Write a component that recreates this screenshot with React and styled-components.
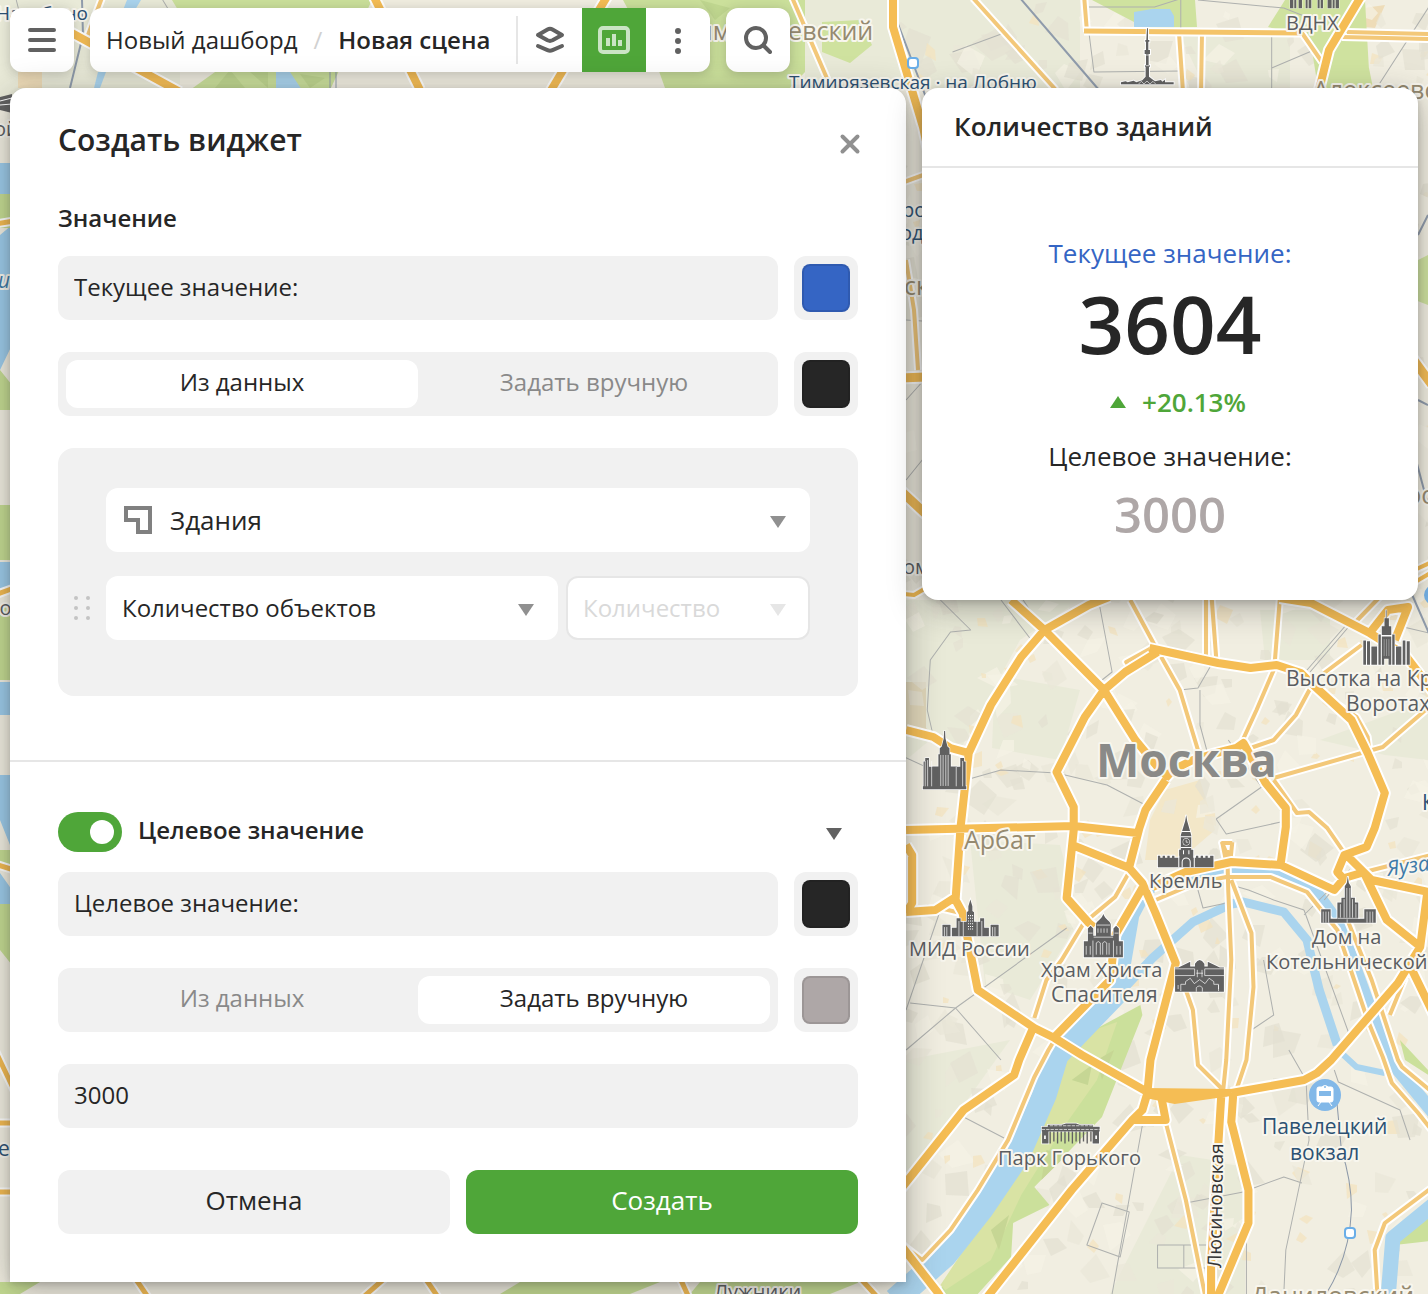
import { useState } from "react";
import styled, { createGlobalStyle } from "styled-components";

const GlobalStyle = createGlobalStyle`
  * {
    box-sizing: border-box;
  }
  body {
    margin: 0;
    background: #f1eee1;
    color: #262626;
    font-family: "Open Sans", "Noto Sans", sans-serif;
    font-size: 24px;
  }
  button, input, select {
    font: inherit;
    color: inherit;
    margin: 0;
  }
  h1, h2, p {
    margin: 0;
  }
`;

const Page = styled.div`
  position: relative;
  min-height: 100vh;
  overflow: hidden;
  display: flex;
  flex-direction: column;
  gap: 16px;
  padding: 8px 10px 12px;
`;

const MapCanvas = styled.svg`
  position: absolute;
  inset: 0;
  width: 100%;
  height: 100%;
  pointer-events: none;
`;

/* toolbar */

const Toolbar = styled.header`
  position: relative;
  display: flex;
  gap: 16px;
  height: 64px;
`;

const Block = styled.div`
  display: flex;
  align-items: center;
  overflow: hidden;
  border-radius: 12px;
  background: white;
  box-shadow: 0 2px 12px rgba(38, 38, 38, 0.25);
`;

const ToolButton = styled.button`
  display: flex;
  align-items: center;
  justify-content: center;
  width: 64px;
  height: 64px;
  padding: 0;
  border: 0;
  background: ${(p) => (p.$active ? "#4fa639" : "transparent")};
  color: ${(p) => (p.$active ? "#cae4c4" : "#616161")};
  cursor: pointer;
`;

const Crumbs = styled.nav`
  display: flex;
  align-items: center;
  gap: 16px;
  padding: 0 26px 2px 16px;
  height: 48px;
  border-right: 2px solid #e6e6e6;
  white-space: nowrap;

  a {
    color: inherit;
    text-decoration: none;
  }
  span {
    color: #d1d1d1;
  }
  b {
    font-weight: 600;
  }
`;

/* panels */

const Content = styled.main`
  position: relative;
  display: grid;
  grid-template-columns: minmax(0, 896fr) minmax(0, 496fr);
  gap: 16px;
  align-items: start;
`;

const Panel = styled.form`
  border-radius: 16px 16px 0 0;
  background: white;
  box-shadow: 0 2px 6px rgba(38, 38, 38, 0.2), 0 8px 36px rgba(38, 38, 38, 0.35);
`;

const Section = styled.section`
  display: flex;
  flex-direction: column;
  gap: 20px;
  padding: ${(p) => p.$padding};
  border-bottom: ${(p) => (p.$divided ? "2px solid #e6e6e6" : "0")};
`;

const PanelHead = styled.div`
  display: flex;
  align-items: center;
  justify-content: space-between;
  padding: 32px 48px 0;
`;

const PanelTitle = styled.h1`
  font-size: 30px;
  font-weight: 600;
  line-height: 40px;
`;

const SectionTitle = styled.h2`
  font-size: 24px;
  font-weight: 600;
  line-height: 36px;
`;

const IconButton = styled.button`
  display: flex;
  align-items: center;
  justify-content: center;
  width: ${(p) => p.$width};
  height: 40px;
  padding: ${(p) => p.$top} 0 0;
  border: 0;
  background: none;
  color: ${(p) => p.$color};
  cursor: pointer;
`;

const Fields = styled.div`
  display: flex;
  flex-direction: column;
  gap: 32px;
`;

const Row = styled.div`
  display: grid;
  grid-template-columns: minmax(0, 1fr) 64px;
  gap: 16px;
`;

const TextInput = styled.input`
  width: 100%;
  height: 64px;
  padding: 0 16px 4px;
  border: 0;
  border-radius: 12px;
  background: #f1f1f1;
`;

const Swatch = styled.input`
  width: 64px;
  height: 64px;
  padding: 8px;
  border: 0;
  border-radius: 12px;
  background: #f1f1f1;
  appearance: none;

  &::-webkit-color-swatch-wrapper {
    padding: 0;
  }
  &::-webkit-color-swatch {
    border: 2px solid rgba(0, 0, 0, 0.1);
    border-radius: 8px;
  }
`;

const Segments = styled.div`
  display: grid;
  grid-template-columns: 1fr 1fr;
  height: 64px;
  padding: 8px;
  border-radius: 12px;
  background: #f1f1f1;
`;

const Segment = styled.label`
  display: flex;
  align-items: center;
  justify-content: center;
  padding-bottom: 5px;
  border-radius: 12px;
  color: #898989;
  cursor: pointer;

  &:has(input:checked) {
    background: white;
    color: #262626;
  }
  input {
    appearance: none;
    width: 0;
    height: 0;
  }
`;

const SourceGroup = styled.div`
  display: grid;
  grid-template-columns: 16px minmax(0, 1fr);
  gap: 24px 16px;
  align-items: center;
  padding: 40px 48px 56px 16px;
  border-radius: 16px;
  background: #f1f1f1;
`;

const Pair = styled.div`
  display: grid;
  grid-template-columns: minmax(0, 452fr) minmax(0, 244fr);
  gap: 8px;
`;

const SelectBox = styled.div`
  position: relative;
  grid-column: ${(p) => p.$column};

  select {
    display: block;
    width: 100%;
    height: 64px;
    padding: ${(p) => (p.$icon ? "0 56px 0 64px" : "0 56px 2px 16px")};
    border: 0;
    border-radius: 12px;
    background: white;
    font-size: ${(p) => (p.$icon ? "26px" : "24px")};
    appearance: none;
  }
  select:disabled {
    padding-left: 15px;
    border: 2px solid #e6e6e6;
    color: #d9d9d9;
    opacity: 1;
  }
`;

const SelectIcon = styled.svg`
  position: absolute;
  left: 18px;
  top: 18px;
  pointer-events: none;
`;

const SwitchRow = styled.div`
  display: flex;
  align-items: center;
  justify-content: space-between;
  height: 40px;
`;

const SwitchLabel = styled.label`
  display: flex;
  align-items: center;
  gap: 16px;
  font-weight: 600;
  line-height: 36px;

  span {
    padding-bottom: 4px;
  }
`;

const Switch = styled.input`
  display: flex;
  justify-content: flex-end;
  width: 64px;
  height: 40px;
  padding: 8px;
  border-radius: 20px;
  background: #b8b8b8;
  appearance: none;

  &::before {
    content: "";
    width: 24px;
    height: 24px;
    border-radius: 50%;
    background: white;
  }
  &:checked {
    background: #4fa639;
  }
  &:not(:checked) {
    justify-content: flex-start;
  }
`;

const Footer = styled.div`
  display: grid;
  grid-template-columns: 1fr 1fr;
  gap: 16px;
  padding: 42px 48px 48px;
`;

const Button = styled.button`
  height: 64px;
  padding: 0 16px 4px;
  border: 0;
  border-radius: 12px;
  background: ${(p) => (p.$primary ? "#4fa639" : "#f1f1f1")};
  color: ${(p) => (p.$primary ? "white" : "#262626")};
  font-size: 26px;
  cursor: pointer;
`;

/* widget card */

const Card = styled.aside`
  border-radius: 16px;
  background: white;
  box-shadow: 0 2px 6px rgba(38, 38, 38, 0.2), 0 8px 32px rgba(38, 38, 38, 0.35);
`;

const CardTitle = styled.h2`
  padding: 20px 32px 22px;
  border-bottom: 2px solid #e6e6e6;
  font-size: 26px;
  font-weight: 600;
  line-height: 36px;
`;

const CardBody = styled.div`
  display: flex;
  flex-direction: column;
  align-items: center;
  padding: 66px 32px 54px;
`;

const CardText = styled.p`
  color: ${(p) => p.$color};
  font-size: ${(p) => p.$size};
  font-weight: ${(p) => p.$weight || 400};
  line-height: ${(p) => p.$line};
`;

const Delta = styled.div`
  display: flex;
  align-items: center;
`;

/* small parts */

const Triangle = (props) => (
  <svg width="16" height="12" viewBox="0 0 16 12" {...props}>
    <path d="M0 0h16L8 12z" fill="currentColor" />
  </svg>
);

const SelectArrow = styled(Triangle)`
  position: absolute;
  right: 24px;
  top: 28px;
  pointer-events: none;
  color: ${(p) => p.color};
`;

const Dropdown = ({ label, options, icon, disabled, column }) => (
  <SelectBox $icon={icon} $column={column}>
    <select aria-label={label} disabled={disabled}>
      {options.map((o) => (
        <option key={o}>{o}</option>
      ))}
    </select>
    {icon && (
      <SelectIcon width="28" height="28" viewBox="0 0 28 28">
        <path d="M2 2h24v24H14V14H2z" fill="none" stroke="#808080" strokeWidth="4" />
      </SelectIcon>
    )}
    <SelectArrow color={disabled ? "#e6e6e6" : "#909090"} />
  </SelectBox>
);

const SourceSwitch = ({ name, value, onChange }) => (
  <Segments>
    {["Из данных", "Задать вручную"].map((text) => (
      <Segment key={text}>
        <input
          type="radio"
          name={name}
          checked={value === text}
          onChange={() => onChange(text)}
        />
        {text}
      </Segment>
    ))}
  </Segments>
);

/* map data */

const primaryRoads = `
M1010 600L1043 630L1102 690L1133 740L1155 767L1166 778
M1107 597L1087 605L1043 630L1020 657L990 705L968 753L960 827L955 900L962 913L977 990L1033 1028L1053 1038L1080 1055L1145 1092
M1102 690L1123 672L1155 652M1147 648L1215 663L1247 668L1273 665L1297 673L1307 683L1347 720L1363 753L1380 793L1370 828L1362 847L1340 855L1333 872L1340 880
M1102 690L1083 717L1055 772L1072 807L1072 830L1065 898L1087 923L1092 927
M1073 846L1127 868L1140 883L1153 913L1173 963L1148 1060L1145 1092
M906 830L1072 826L1135 833M1163 780L1143 810L1137 828L1127 867
M1163 778L1170 770L1190 760L1213 753L1233 748L1240 743L1262 783L1282 808L1282 827L1277 863
M1276 598L1307 603L1365 633L1400 655L1434 700M1365 633L1383 610L1403 607L1390 640
M906 730L933 737L950 748L968 753
M906 912L935 910L955 897
M906 845L912 855L912 903L906 913
M1140 888L1113 935L1108 980L1053 1037M1033 1025L1018 1060L1013 1075L963 1110L900 1190
M1150 887L1183 872L1228 862L1277 865L1330 890L1340 878L1360 872
M1340 853L1367 880L1428 893M1360 874L1382 920L1413 945M1422 893L1415 947L1393 983L1327 1060L1313 1073L1300 1080L1228 1093M1407 970L1432 1022
M1145 1093L1140 1110L1130 1120L1163 1120L1158 1093M1130 1120L1070 1190L984 1300
M1218 1097L1208 1263L1208 1300M1230 1093L1228 1122L1245 1190L1245 1223L1213 1300
M900 1244L937 1292L945 1304`;

const minorRoads = `
M1128 600L1152 645L1177 690L1195 750
M1203 590V657M1208 590L1213 657M1276 600L1271 663
M1122 673L1129 669L1124 662L1149 648
M1307 687L1352 717L1363 737L1365 753
M1270 670L1253 710L1238 743M1247 748L1270 740L1292 715L1308 685M1320 673L1357 645M1375 597L1350 623
M1270 778L1357 753L1378 747L1434 698
M1270 780L1293 813L1305 812L1323 828L1340 853
M935 907L960 913M1219 842L1223 862M1229 842L1227 862L1219 843H1229
M1127 872L1113 897L1082 923L1060 960L1045 980L1033 1018
M1053 1040L1047 1050L1033 1077L1007 1140L977 1190L950 1230L922 1260L900 1243
M1153 900L1193 883L1223 877L1267 877L1303 892L1333 930L1363 1020L1378 1057L1387 1083L1413 1113L1434 1140
M1343 920L1367 980L1393 1060L1397 1067L1434 1098
M1224 850L1225 890L1228 960L1223 1060L1220 1090M1228 880L1248 933L1250 987L1243 1060L1233 1090
M1183 990L1190 1010L1195 1065L1220 1090M1163 1122L1183 1200L1203 1300
M1434 1182L1380 1223L1370 1250L1373 1300M1360 872L1434 853M1400 978L1385 1015`;

const topRoads = `
M373 -5L420 90M608 -5L550 92M70 32L180 92M893 -5V27L923 127L930 160
M1362 -5L1329 50L1319 90`;

const topMinorRoads = `
M103 -5L88 35M791 -5L832 90M973 -2L1056 90M1084 -5L1087 32
M1179 33L1183 92M1202 33L1201 92M1302 33L1322 62M1347 32L1432 34M1342 37L1432 39
M904 182L926 174M906 260L914 310L918 370`;

const greyLines = `
M900 755L958 782L1000 770L1055 773L1105 785L1143 805M940 600L970 630L950 632L930 660L927 710L935 745
M1000 600L1030 640M1096 597L1110 672L1100 680M1177 690L1195 688L1207 667M1197 690V725L1205 755
M1213 819L1258 787L1225 740M1277 822L1223 834L1213 819M1195 890L1200 908L1228 902M1228 885L1245 890L1270 900L1300 910M1300 915L1345 870L1320 900
M906 1050L955 1008L1000 1060M910 1003L955 1008L1065 928M906 1010L940 910M963 1117L1003 1138
M1140 1125L1110 1294M1100 1203L1127 1212L1118 1257L1085 1245ZM1183 1203L1245 1191M1155 1245H1210V1268H1155ZM1181 1245V1268
M1280 1294L1282 1250L1305 1140L1302 1080L1285 1050M1330 1070L1334 1082L1395 1110L1405 1140M1245 1190L1280 1177L1298 1183M1243 1190V1294
M1260 960L1270 1015L1248 1030M1300 910L1318 960L1345 1035M1350 620L1306 672M1346 620L1303 670M1428 634L1390 625
M25 0L28 12M170 0L182 20M1087 32L1092 72L1180 71M952 52L1003 33M1268 35V88M1268 68L1310 50M1428 0L1372 88M1178 0V30M1084 7L1152 7L1180 -2M1195 0L1280 8L1305 18
M906 320L922 321M906 400L922 382M906 480L922 460M1020 597L1035 620`;

// city blocks, scattered with a fixed seed so that the map never flickers
const patches = [];
let seed = 11;
const rnd = () => {
  seed = (seed * 16807) % 2147483647;
  return seed / 2147483647;
};
const blockFills = ["#e4e1d3", "#f5f2e6", "#e9e7d8", "#f4e3bd", "#e2e0d1"];
for (let i = 0; i < 800; i++) {
  const x = rnd() * 540 + 900;
  const y = rnd() * 1294;
  const yellow = i % 5 === 3;
  const s = yellow ? 4 + rnd() * 7 : 6 + rnd() * 12;
  const a = rnd() * 3;
  const points = [0, 1, 2, 3].map((k) => {
    const r = s * (0.4 + rnd() * 0.9);
    return `${Math.round(x + r * Math.cos(a + k * 1.57))},${Math.round(y + r * Math.sin(a + k * 1.57))}`;
  });
  patches.push({ points: points.join(" "), fill: blockFills[i % 5] });
}

const labels = [
  { x: 1286, y: 30, text: "ВДНХ" },
  { x: 1286, y: 686, text: "Высотка на Кр", size: 21 },
  { x: 1346, y: 711, text: "Воротах", size: 21 },
  { x: 1149, y: 888, text: "Кремль" },
  { x: 909, y: 956, text: "МИД России" },
  { x: 1041, y: 977, text: "Храм Христа" },
  { x: 1051, y: 1002, text: "Спасителя", size: 21 },
  { x: 1312, y: 944, text: "Дом на" },
  { x: 1266, y: 969, text: "Котельнической" },
  { x: 998, y: 1165, text: "Парк Горького" },
  { x: 1262, y: 1134, text: "Павелецкий", size: 21, fill: "#2c5173" },
  { x: 1290, y: 1160, text: "вокзал", size: 21, fill: "#2c5173" },
  { x: 964, y: 849, text: "Арбат", size: 25, fill: "#958a70" },
  { x: 683, y: 40, text: "Тимирязевский", size: 25, fill: "#958a70" },
  { x: 1313, y: 99, text: "Алексеевский", size: 25, fill: "#958a70" },
  { x: 1251, y: 1305, text: "Даниловский", size: 25, fill: "#958a70" },
  { x: 714, y: 1299, text: "Лужники" },
  { x: 789, y: 89, text: "Тимирязевская · на Лобню", size: 19, fill: "#2c5173" },
  { x: -4, y: 20, text: "Нахабино", size: 19, fill: "#2c5173" },
  { x: -6, y: 136, text: "ой" },
  { x: -12, y: 288, text: "ки", size: 21, fill: "#3d7aa8", italic: true },
  { x: -12, y: 615, text: "во" },
  { x: -14, y: 1156, text: "ле", size: 21, fill: "#2c5173" },
  { x: 902, y: 217, text: "ро", fill: "#2c5173" },
  { x: 900, y: 240, text: "од", fill: "#2c5173" },
  { x: 904, y: 295, text: "ск", size: 25, fill: "#958a70" },
  { x: 903, y: 574, text: "ом" },
  { x: 1406, y: 504, text: "рос", size: 25, fill: "#958a70" },
  { x: 1422, y: 810, text: "К", size: 21, fill: "#2c5173" },
];

const Label = styled.text`
  font-family: "Open Sans", "Noto Sans", sans-serif;
  stroke: #f8f6ee;
  stroke-width: 4px;
  stroke-linejoin: round;
  paint-order: stroke;
`;

const Roads = ({ d, width, color }) => (
  <>
    <path d={d} stroke="white" strokeWidth={width + 4} />
    <path d={d} stroke={color} strokeWidth={width} />
  </>
);

const Landmarks = () => (
  <g fill="#616161" stroke="white" strokeWidth="6" paintOrder="stroke">
    {/* Ostankino tower and VDNKh */}
    <g transform="translate(952 0) scale(.3333)">
      <path d="M585 85h3v35h4v5h-3v25h5v12h-4v33h4v5h-3v30l18 14 18-4 4 5 8-6v8h26v6H507v-6l14-3 6 3 18-5 8 5 18-6 10-11v-30h-2v-5h3v-33h-4v-12h4v-25h-2v-5h3z" />
      <path d="M580 197h13M579 165h14M560 252l8-8 8 8 9-9 9 9 9-8 8 8" stroke="#fff" strokeWidth="2" fill="none" />
      <path d="M1014 0h10v25h-10zM1027 0h6v25h-6zM1040 0h10v25h-10zM1061 0h6v25h-6zM1070 0h8v25h-8zM1097 0h6v25h-6zM1106 0h7v25h-7zM1127 0h12v25h-12zM1142 0h6v25h-6zM1151 0h10v25h-10z" strokeWidth="2" />
    </g>
    <g transform="translate(900 590) scale(.3367)">
      <path d="M1376 150h8v72h-8zM1387 152h9v70h-9zM1400 168h17v54h-17zM1421 132h7v90h-7zM1431 108h8V84h4V60h2v24h7v24h7v26h-28zM1431 138h28v84h-8v-18h-13v18h-7zM1462 132h7v90h-7zM1473 168h16v54h-16zM1493 150h8v72h-8zM1505 152h9v70h-9z" strokeWidth="4" />
      <path d="M1438 146v50M1445 146v50M1452 146v50" stroke="#fff" strokeWidth="1" />
      <path d="M70 583v-74h5v-10h11v26h10v-1h18v-36h4v-18l6-5 6-24 1-22h3l1 22 6 24 6 5v18h4v36h18v1h10v-26h11v10h5v74h2v9H68v-9z" strokeWidth="4" />
      <path d="M94 508v75M121 490v92M128 490v92M136 490v92M143 490v92M167 525v58M186 508v75M75 508v75M82 505v78" stroke="#fff" strokeWidth="2" />
    </g>
    <g transform="translate(900 820) scale(.3367)">
      {/* Kremlin */}
      <path d="M766 140v-34h7v6h7v-6h7v6h7v-6h7v6h7v-6h7v6h14V88h5V45l13-42 3-18 3 18 12 42v43h6v24h8v-6h7v6h7v-6h7v6h7v-6h7v6h7v-6h10v34z" strokeWidth="5" />
      <path d="M837 34h27M834 50h32M834 82h32M828 106v34M874 106v34M838 140v-15a12 12 0 0 1 24 0v15M842 90v12M858 90v12" stroke="#fff" strokeWidth="3" fill="none" />
      <circle cx="850" cy="65" r="9" fill="#616161" stroke="#fff" strokeWidth="3" />
      <path d="M850 59v7h6" stroke="#fff" strokeWidth="2" fill="none" />
      {/* Foreign ministry */}
      <path d="M126 345v-34h24v34zM154 345v-25h14v-28h12v10h18v-28l5-4v-14l6-20 6 20v14l5 4v28h18v-10h12v28h14v25zM269 345v-34h24v34z" strokeWidth="4" />
      <path d="M132 318v27M139 318v27M175 300v45M188 300v45M229 300v45M243 300v45M275 318v27M282 318v27" stroke="#fff" strokeWidth="2" />
      <path d="M202 284h16M202 292h16M202 300h16M202 308h16M202 316h16M202 324h16" stroke="#fff" strokeWidth="3" strokeDasharray="3 3" />
      {/* Cathedral */}
      <path d="M546 408v-48h12v-38l8-8 8 8v22h8v-33c0-12 16-14 22-32 6 18 22 20 22 32v33h8v-22l8-8 8 8v38h12v48z" strokeWidth="5" />
      <path d="M584 312h40M560 336h12M637 336h12M588 322v13M597 322v13M606 322v13M615 322v13M575 348h58" stroke="#fff" strokeWidth="2" />
      <path d="M553 400v-26M565 374v26M583 400v-35q6-8 12 0v35M602 400v-35q6-8 12 0v35M621 400v-35M644 374v26M654 374v26M573 358v50M634 358v50" stroke="#fff" strokeWidth="2" fill="none" />
      {/* Tretyakov gallery */}
      <path d="M817 510v-72h10l35-17v14h14v-8q14-22 28 0v8h10v-14l36 17h12v72z" strokeWidth="5" />
      <path d="M817 442h58v20h-58M963 442h-58v20h58M883 445v22M897 445v22M880 455h20M834 508v-20h14v-8l14-10 12 16 16-12 16 12 12-16 14 10v8h14v20M880 510v-12q9-10 18 0v12M826 490v12M946 490v12" stroke="#fff" strokeWidth="2" fill="none" />
      {/* Kotelnicheskaya */}
      <path d="M1251 305v-40h28v28h20v-48h12v-14h10v-34l6-10 3-20 3 20 6 10v34h12v14h10v48h18v-28h34v40z" strokeWidth="5" />
      <path d="M1257 272v33M1265 272v33M1273 272v33M1308 250v40M1319 235v55M1327 202v88M1336 202v88M1344 235v55M1354 250v40M1387 272v33M1396 272v33M1404 272v33M1300 292h65M1328 295v10" stroke="#fff" strokeWidth="2" />
    </g>
    {/* Gorky park gate */}
    <g transform="translate(900 1050) scale(.3367)">
      <path d="M421 228h18v-6h42l12-4h30l10 4h40v6h20v14h-2v36h-19v-36H441v36h-19v-36h-1z" strokeWidth="4" />
      <path d="M421 236h172M445 225h130" stroke="#fff" strokeWidth="2" strokeDasharray="10 3" />
      <path d="M446 242v36M457 242v30M468 242v36M479 242v30M490 242v36M501 242v30M512 242v36M523 242v30M534 242v36M545 242v30M556 242v36M567 242v30" stroke="#616161" strokeWidth="4" />
      <path d="M428 254h5v10h-5zM580 254h5v10h-5z" fill="#fff" stroke="none" />
    </g>
  </g>
);

const CityMap = () => (
  <MapCanvas viewBox="0 0 1428 1294" preserveAspectRatio="xMinYMin slice" aria-hidden="true">
    <rect width="1428" height="1294" fill="#f1eee1" />
    <path d="M906 600H1080L1020 640L960 750L930 740L906 760ZM995 675L1080 690L1060 760L992 748ZM970 840L1060 845L1080 920L1030 1000L985 985ZM1260 610H1330V660H1265ZM1320 740L1428 700V760L1385 755ZM1180 1155L1245 1165V1294H1110ZM906 1060L1010 1040L960 1110L906 1180ZM805 0H1080V88H805ZM1180 35H1290V88H1205ZM0 0H180V100H0Z" fill="#e9ead8" />
    <path d="M906 682H926V728L933 735H906Z" fill="#e0d6b9" />
    <path d="M18 72H42V88H18ZM1350 10L1385 5L1375 28L1355 26Z" fill="#eedcb8" />
    <path d="M1165 790L1200 780L1215 830L1180 860H1145L1150 820Z" fill="#f3e7c8" />
    {patches.map((p, i) => (
      <polygon key={i} points={p.points} fill={p.fill} opacity=".7" />
    ))}

    <path d="M172 0H372L330 90H190L215 72ZM623 0H805V72L790 88H665L655 60Z" fill="#cbe09b" />
    <path d="M230 70L245 88H215ZM700 0L730 8L715 20ZM250 72H268V88ZM300 74L325 78L310 88Z" fill="#bfd68f" />
    <path d="M1092 0H1195L1197 27L1150 28L1134 22ZM1268 27L1285 0H1365L1370 88H1318L1310 38ZM1350 40L1367 58L1373 88H1330ZM822 22L860 20L872 45L850 63L822 52ZM1418 260L1428 255V305L1415 300Z" fill="#cfe29f" />
    <path d="M1134 12L1152 9H1170L1174 16V27H1134ZM98 72H106L100 88H94ZM276 72H290L302 90H276ZM127 0H141L135 10H123Z" fill="#aad4ee" />

    {/* strip along the left edge */}
    <path d="M0 163H12V194H0ZM0 235L12 225V345L0 370ZM0 562H12V590H0ZM0 682H12V715H0ZM0 775H12V850L0 820ZM0 873L12 890V904H0Z" fill="#9ccbea" />
    <path d="M0 194H12V228H0ZM0 370L12 385V410H0ZM0 505H12V560H0ZM0 605H12V680H0ZM0 850H12V870H0ZM0 904H12V965L0 950Z" fill="#c5dc92" />
    <g fill="none">
      <Roads d="M-5 224L14 221M-5 595L14 588M-5 864L14 870M-5 1050L14 1090M-5 1123H14M-5 1192H14" width={5} color="#f3ba51" />
    </g>
    <path d="M0 1282H40L20 1294H0ZM520 1282H660L630 1294H500ZM700 1282H860L830 1294H690Z" fill="#c5dc92" />
    <g fill="none">
      <Roads d="M135 1278L150 1300M360 1300L385 1278M425 1278L440 1300M680 1278L690 1300M860 1278L880 1300" width={5} color="#f3ba51" />
    </g>

    <g fill="none" strokeLinejoin="round" strokeLinecap="butt">
      <g transform="matrix(1.01 0 0 1 -9 0)">
        <path d="M1092 1030L1138 1005L1140 1015L1100 1117L1033 1187L1048 1205L1012 1223L1010 1257L977 1294H937L1007 1183L1043 1117L1055 1070Z" fill="#cbe09b" />
        <path d="M1060 1060L1092 1030L1115 1022L1095 1080L1060 1130L1020 1195L990 1260L945 1290L940 1285L1007 1183L1043 1117Z" fill="#d9e3a4" />
        <path d="M1070 1080L1090 1065L1086 1085ZM1045 1150L1065 1155L1040 1180ZM990 1230L1008 1215L998 1250ZM1095 1060L1112 1050L1100 1080Z" fill="#c6d694" />
        <path d="M1395 1040L1434 1082L1400 1060ZM1388 1240L1434 1210V1240L1390 1245Z" fill="#cbe09b" />
        <g stroke="#aad4ee">
          <path d="M1143 890L1130 915L1124 950L1118 985" strokeWidth="14" />
          <path d="M1120 975L1112 995L1090 1018L1055 1055L1043 1095L1017 1155L980 1210L945 1255L895 1300" strokeWidth="24" />
          <path d="M1140 896L1165 880L1228 870L1275 872L1315 893" strokeWidth="7" />
          <path d="M1310 890L1335 925L1362 1000L1385 1060L1434 1120" strokeWidth="13" />
          <path d="M1122 988L1150 958L1190 922L1228 904L1240 902L1280 912L1303 940L1315 990L1333 1045" strokeWidth="9" />
          <path d="M1337 1053L1352 1067L1380 1073" strokeWidth="6" />
          <path d="M1434 1200L1388 1238L1383 1300" strokeWidth="15" />
          <path d="M906 860V900" strokeWidth="6" />
        </g>
        <path d={greyLines} stroke="#aeb0ae" strokeWidth="1" />
        <path d="M1331 1085L1337 1150Q1347 1180 1347 1210Q1345 1260 1318 1300" stroke="#8c98a8" strokeWidth="1" />
        <Roads d={minorRoads} width={4} color="#f3c879" />
        <Roads d={primaryRoads} width={8} color="#f5bd54" />
        <path d="M1143 1088L1228 1089V1096L1172 1104L1143 1098Z" fill="#f5bd54" />
      </g>
      <path d="M1020 -2L1099 90M82 0L83 35L70 88M1410 590L1432 640M1418 235L1428 215M1418 400L1428 405M1416 460L1428 505M898 0V24L927 100" stroke="#8f9bab" strokeWidth="2" />
      <path d="M330 72V90M336 72V90" stroke="#8f9bab" strokeWidth="1" />
      <Roads d={topMinorRoads} width={4} color="#f3c879" />
      <Roads d="M1084 31L1302 33" width={5} color="#f4c469" />
      <Roads d={topRoads} width={8} color="#f5bd54" />
      <Roads d="M900 378L926 377M900 490L930 518M1410 355L1432 385" width={9} color="#f5bd54" />
      <Roads d="M904 594L914 595L926 588M1410 572L1432 562M1410 585L1432 572" width={4} color="#f5bd54" />
    </g>

    <g fill="white" stroke="#6aaee8" strokeWidth="2">
      <rect x="908" y="58" width="10" height="10" rx="3" />
      <rect x="1345" y="1228" width="10" height="10" rx="3" />
    </g>
    <circle cx="1434" cy="595" r="10" fill="#75b3ea" />
    <circle cx="1325" cy="1095" r="16" fill="#82b8e8" />
    <path d="M1317 1089q0-2 2-2h3a4 4 0 0 1 6 0h3q2 0 2 2v11q0 2-2 2h-12q-2 0-2-2zM1321 1102l-3 4M1329 1102l3 4" fill="white" stroke="white" />
    <rect x="1319" y="1091" width="12" height="5" fill="#82b8e8" />
    <circle cx="1325" cy="1087" r="1" fill="#82b8e8" />

    <Landmarks />

    {labels.map((l) => (
      <Label
        key={l.text + l.y}
        x={l.x}
        y={l.y}
        fontSize={l.size || 20}
        fill={l.fill || "#5a5d61"}
        fontStyle={l.italic ? "italic" : "normal"}
      >
        {l.text}
      </Label>
    ))}
    <Label x="1096" y="777" fontSize="46" fontWeight="700" fill="#8a8a88">
      Москва
    </Label>
    <Label transform="translate(1221 1268) rotate(-89)" fontSize="19" fill="#333">
      Люсиновская
    </Label>
    <Label transform="translate(1388 876) rotate(-8)" fontSize="21" fontStyle="italic" fill="#3d7aa8">
      Яуза
    </Label>
    <path d="M0 97L12 94V113L0 110Z" fill="#616161" />
    <path d="M0 101L12 98M0 105L12 104" stroke="white" />
  </MapCanvas>
);

export default function App() {
  const [current, setCurrent] = useState("Из данных");
  const [target, setTarget] = useState("Задать вручную");

  return (
    <Page>
      <GlobalStyle />
      <CityMap />
      <Toolbar>
        <Block>
          <ToolButton aria-label="Меню">
            <svg width="28" height="24" viewBox="0 0 28 24">
              <path d="M2 2h24M2 12h24M2 22h24" stroke="currentColor" strokeWidth="4" strokeLinecap="round" />
            </svg>
          </ToolButton>
        </Block>
        <Block>
          <Crumbs>
            <a href="#dashboard">Новый дашборд</a>
            <span>/</span>
            <b>Новая сцена</b>
          </Crumbs>
          <ToolButton aria-label="Слои">
            <svg width="32" height="32" viewBox="0 0 32 32" fill="none" stroke="currentColor" strokeWidth="4" strokeLinejoin="round" strokeLinecap="round">
              <path d="M4 11L13.500 5.500Q16 4 18.500 5.500L28 11L18.500 16.300Q16 17.500 13.500 16.300Z" />
              <path d="M4 22L13.500 26.200Q16 27.300 18.500 26.200L28 22" />
            </svg>
          </ToolButton>
          <ToolButton $active aria-label="Виджеты">
            <svg width="32" height="28" viewBox="0 0 32 28">
              <rect x="2" y="2" width="28" height="24" rx="3" fill="none" stroke="currentColor" strokeWidth="4" />
              <path d="M8 12h4v8H8zM14 8h4v12h-4zM20 14h4v6h-4z" fill="currentColor" />
            </svg>
          </ToolButton>
          <ToolButton aria-label="Ещё">
            <svg width="8" height="28" viewBox="0 0 8 28" fill="currentColor">
              <circle cx="4" cy="5" r="3" />
              <circle cx="4" cy="15" r="3" />
              <circle cx="4" cy="25" r="3" />
            </svg>
          </ToolButton>
        </Block>
        <Block>
          <ToolButton aria-label="Поиск">
            <svg width="28" height="28" viewBox="0 0 28 28" fill="none" stroke="currentColor" strokeWidth="4" strokeLinecap="round">
              <circle cx="12" cy="12" r="10" />
              <path d="M19.500 19.500L26 26" />
            </svg>
          </ToolButton>
        </Block>
      </Toolbar>

      <Content>
        <Panel onSubmit={(e) => e.preventDefault()}>
          <PanelHead>
            <PanelTitle>Создать виджет</PanelTitle>
            <IconButton type="button" $width="16px" $top="8px" $color="#909090" aria-label="Закрыть">
              <svg width="16" height="16" viewBox="0 0 16 16" overflow="visible">
                <path d="M.5.5l15 15M15.500.5l-15 15" stroke="currentColor" strokeWidth="4" strokeLinecap="round" />
              </svg>
            </IconButton>
          </PanelHead>

          <Section $padding="40px 48px 64px" $divided>
            <SectionTitle>Значение</SectionTitle>
            <Fields>
              <Row>
                <TextInput aria-label="Подпись значения" defaultValue="Текущее значение:" />
                <Swatch type="color" aria-label="Цвет подписи" defaultValue="#3565c4" />
              </Row>
              <Row>
                <SourceSwitch name="current" value={current} onChange={setCurrent} />
                <Swatch type="color" aria-label="Цвет значения" defaultValue="#262626" />
              </Row>
              <SourceGroup>
                <Dropdown label="Данные" options={["Здания"]} icon column="2" />
                <svg width="16" height="24" viewBox="0 0 16 24" fill="#c4c4c4">
                  {[2, 12, 22].map((y) => (
                    <g key={y}>
                      <circle cx="2" cy={y} r="2" />
                      <circle cx="14" cy={y} r="2" />
                    </g>
                  ))}
                </svg>
                <Pair>
                  <Dropdown label="Показатель" options={["Количество объектов"]} />
                  <Dropdown label="Агрегация" options={["Количество"]} disabled />
                </Pair>
              </SourceGroup>
            </Fields>
          </Section>

          <Section $padding="50px 48px 0">
            <SwitchRow>
              <SwitchLabel>
                <Switch type="checkbox" defaultChecked />
                <span>Целевое значение</span>
              </SwitchLabel>
              <IconButton type="button" $width="48px" $top="4px" $color="#616161" aria-label="Свернуть">
                <Triangle />
              </IconButton>
            </SwitchRow>
            <Fields>
              <Row>
                <TextInput aria-label="Подпись цели" defaultValue="Целевое значение:" />
                <Swatch type="color" aria-label="Цвет подписи цели" defaultValue="#262626" />
              </Row>
              <Row>
                <SourceSwitch name="target" value={target} onChange={setTarget} />
                <Swatch type="color" aria-label="Цвет цели" defaultValue="#aea7a7" />
              </Row>
              <TextInput aria-label="Цель" defaultValue="3000" />
            </Fields>
          </Section>

          <Footer>
            <Button type="button">Отмена</Button>
            <Button $primary>Создать</Button>
          </Footer>
        </Panel>

        <Card>
          <CardTitle>Количество зданий</CardTitle>
          <CardBody>
            <CardText $color="#3565c4" $size="26px" $line="38px">Текущее значение:</CardText>
            <CardText $color="#262626" $size="80px" $line="102px" $weight="600">3604</CardText>
            <Delta>
              <svg width="48" height="12" viewBox="0 0 48 12">
                <path d="M16 12h16L24 0z" fill="#4fa639" />
              </svg>
              <CardText $color="#4fa639" $size="26px" $line="56px" $weight="600">+20.13%</CardText>
            </Delta>
            <CardText $color="#262626" $size="26px" $line="52px">Целевое значение:</CardText>
            <CardText $color="#aea7a7" $size="49px" $line="64px" $weight="600">3000</CardText>
          </CardBody>
        </Card>
      </Content>
    </Page>
  );
}
